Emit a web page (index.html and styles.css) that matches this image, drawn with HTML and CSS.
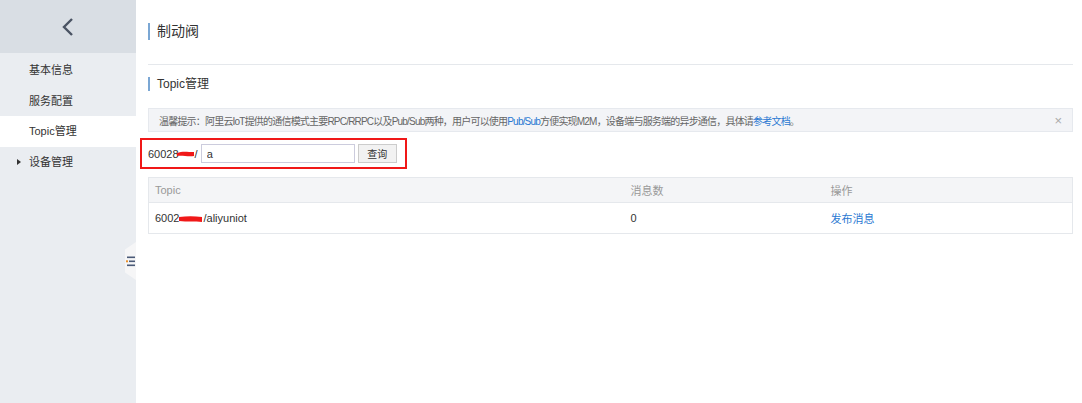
FILE: index.html
```html
<!DOCTYPE html>
<html lang="zh">
<head>
    <meta charset="UTF-8">
    <title>制动阀 - Topic管理</title>
    <link rel="stylesheet" href="styles.css">
</head>
<body>
    <div class="page">
        <div class="sidebar">
            <div class="side-top">
                <svg width="12" height="18" viewBox="0 0 12 18"><path d="M10 1 L2 9 L10 17" fill="none" stroke="#4a5363" stroke-width="2.4"/></svg>
            </div>
            <ul class="side-menu">
                <li>基本信息</li>
                <li>服务配置</li>
                <li class="active">Topic管理</li>
                <li class="group"><span class="caret"></span>设备管理</li>
            </ul>
            <div class="collapse">
                <svg width="10" height="11" viewBox="0 0 10 11">
                    <rect x="1" y="0.5" width="8" height="1.6" fill="#4b5a78"/>
                    <rect x="3" y="4.5" width="6" height="1.6" fill="#4b5a78"/>
                    <rect x="0" y="4.3" width="2" height="2" fill="#e8902c"/>
                    <rect x="1" y="8.5" width="8" height="1.6" fill="#4b5a78"/>
                </svg>
            </div>
        </div>

        <div class="main">
            <h1 class="title">制动阀</h1>
            <div class="divider"></div>
            <h2 class="subtitle">Topic管理</h2>

            <div class="notice">
                <span>温馨提示：阿里云IoT提供的通信模式主要RPC/RRPC以及Pub/Sub两种，用户可以使用<a>Pub/Sub</a>方便实现M2M，设备端与服务端的异步通信，具体请<a>参考文档</a>。</span>
                <span class="close">×</span>
            </div>

            <div class="search">
                <span class="prefix">60028<svg class="mask" width="18" height="8" viewBox="0 0 18 8"><path d="M0 3 C5 1 10 2 17 2 L17 6 C11 7 5 5 0 6 Z" fill="#f01818"/></svg>/</span>
                <input class="query" type="text" value="a">
                <button class="btn">查询</button>
            </div>

            <table class="topics">
                <thead>
                    <tr>
                        <th class="c1">Topic</th>
                        <th class="c2">消息数</th>
                        <th class="c3">操作</th>
                    </tr>
                </thead>
                <tbody>
                    <tr>
                        <td>6002<svg class="mask" width="24" height="8" viewBox="0 0 24 8"><path d="M0 2 C8 1 15 1 23 2 L23 7 C16 6 8 7 0 6 Z" fill="#f01818"/></svg>/aliyuniot</td>
                        <td>0</td>
                        <td><a>发布消息</a></td>
                    </tr>
                </tbody>
            </table>
        </div>
    </div>
</body>
</html>
```

FILE: styles.css
```css
*{
    box-sizing: border-box;
}
html, body{
    margin: 0;
    padding: 0;
    background: #fff;
}
body{
    font-family: "Liberation Sans", "Noto Sans CJK SC", sans-serif;
    font-size: 12px;
    color: #333;
}
.page{
    display: flex;
    height: 403px;
}

.sidebar{
    position: relative;
    width: 136px;
    flex: none;
    background: #eaedf1;
}
.side-top{
    height: 53px;
    background: #d9dee4;
    display: flex;
    align-items: center;
    justify-content: center;
}
.side-menu{
    list-style: none;
    margin: 0;
    padding: 2px 0 0;
}
.side-menu li{
    height: 30.5px;
    line-height: 30px;
    padding-left: 29px;
    font-size: 11px;
    color: #333;
    position: relative;
}
.side-menu li.active{
    background: #fff;
}
.caret{
    position: absolute;
    left: 17px;
    top: 12px;
    border-left: 4px solid #333;
    border-top: 3.5px solid transparent;
    border-bottom: 3.5px solid transparent;
}
.collapse{
    position: absolute;
    right: 0;
    top: 242px;
    width: 11px;
    height: 38px;
    background: #f6f6f7;
    clip-path: polygon(0 20%, 100% 0, 100% 100%, 0 80%);
    display: flex;
    align-items: center;
    justify-content: flex-end;
}

.main{
    flex: 1;
    padding: 0 9px 0 12px;
}
.title{
    margin: 23px 0 0;
    font-size: 14px;
    font-weight: normal;
    line-height: 17px;
    color: #333;
    border-left: 2px solid #7ba7d4;
    padding-left: 7px;
}
.divider{
    margin-top: 24px;
    height: 1px;
    background: #e5e8ec;
}
.subtitle{
    margin: 12px 0 0;
    font-size: 12px;
    font-weight: normal;
    line-height: 14px;
    color: #333;
    border-left: 2px solid #7ba7d4;
    padding-left: 7px;
}

.notice{
    margin-top: 17px;
    height: 24px;
    background: #f3f4f7;
    border: 1px solid #e6e9ee;
    display: flex;
    align-items: center;
    justify-content: space-between;
    padding: 0 10px;
    font-size: 10px;
    letter-spacing: -0.8px;
    color: #666;
}
.notice a{
    color: #2a78d2;
}
.close{
    font-size: 13px;
    color: #aaa;
    letter-spacing: 0;
}

.search{
    margin: 6px 0 0 -8px;
    width: 267px;
    height: 31px;
    border: 2px solid #f01818;
    display: flex;
    align-items: center;
    padding-left: 6px;
}
.prefix{
    font-size: 11px;
    color: #333;
    display: flex;
    align-items: center;
}
.mask{
    margin-left: -2px;
    margin-right: 0;
}
.query{
    margin-left: 3px;
    width: 154px;
    height: 19px;
    border: 1px solid #ccd;
    font-family: inherit;
    font-size: 11px;
    padding: 0 5px;
    color: #333;
}
.btn{
    margin-left: 3px;
    width: 39px;
    height: 19px;
    border: 1px solid #ccc;
    background: #f2f2f2;
    font-family: inherit;
    font-size: 10px;
    color: #333;
    padding: 0;
}

.topics{
    margin-top: 8px;
    width: 100%;
    border-collapse: collapse;
    border: 1px solid #e5e8ec;
    font-size: 11px;
}
.topics th{
    height: 25px;
    background: #f4f5f7;
    font-weight: normal;
    color: #999;
    text-align: left;
    padding-left: 6px;
    border-bottom: 1px solid #e5e8ec;
}
.topics td{
    height: 31px;
    padding-left: 6px;
    color: #333;
}
.topics td .mask{
    vertical-align: middle;
    margin: 0;
}
.c1{
    width: 476px;
}
.c2{
    width: 200px;
}
.topics a{
    color: #2a78d2;
}
```
